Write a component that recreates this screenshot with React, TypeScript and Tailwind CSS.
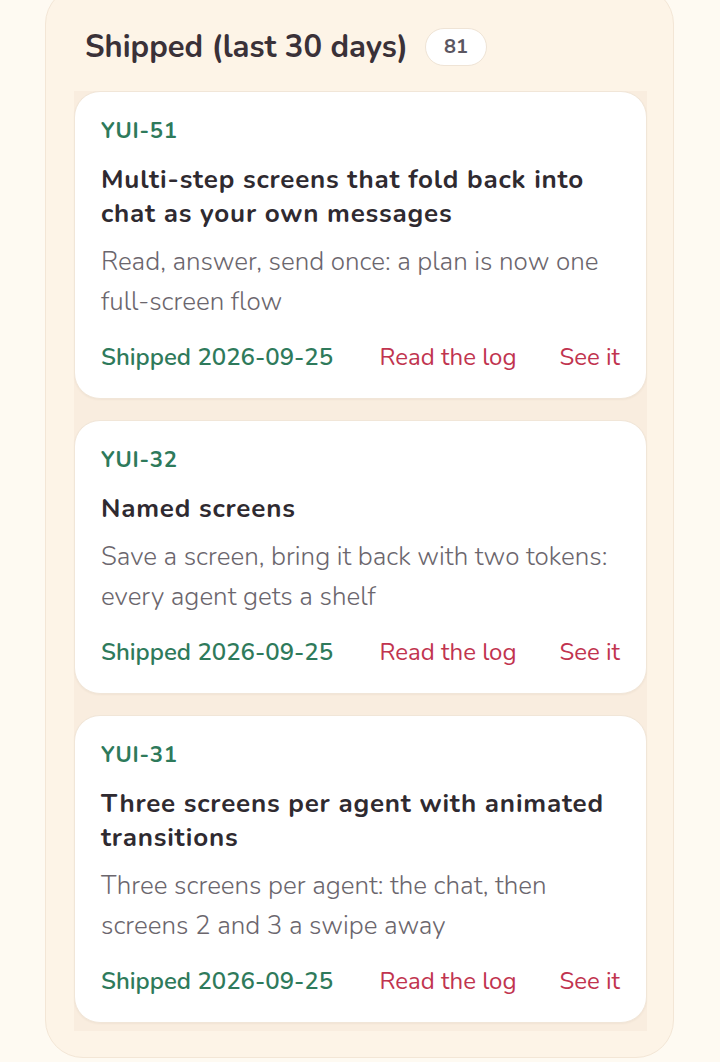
import * as React from "react";

type Item = {
	id: string;
	title: string;
	body: string;
	date: string;
};

const items: Item[] = [
	{
		id: "YUI-51",
		title: "Multi-step screens that fold back into chat as your own messages",
		body: "Read, answer, send once: a plan is now one full-screen flow",
		date: "2026-09-25",
	},
	{
		id: "YUI-32",
		title: "Named screens",
		body: "Save a screen, bring it back with two tokens: every agent gets a shelf",
		date: "2026-09-25",
	},
	{
		id: "YUI-31",
		title: "Three screens per agent with animated transitions",
		body: "Three screens per agent: the chat, then screens 2 and 3 a swipe away",
		date: "2026-09-25",
	},
];

function ShippedCard({ item }: { item: Item }) {
	return (
		<div className="rounded-[26px] border border-[#f1e6d8] bg-white px-[26px] pt-[26px] pb-[26px] shadow-[0_1px_2px_rgba(120,90,50,0.06)]">
			<div className="text-[22px] font-bold leading-[26px] tracking-[0.8px] text-[#2e7a5b]">
				{item.id}
			</div>
			<div className="mt-[19px] text-[26px] font-bold leading-[34px] tracking-[0.8px] text-[#2f2a30]">
				{item.title}
			</div>
			<div className="mt-[11px] text-[26px] font-light leading-[40px] text-[#6b666d]">
				{item.body}
			</div>
			<div className="mt-[20px] flex items-center justify-between text-[24px] leading-[30px]">
				<span className="font-semibold text-[#2e7a5b]">Shipped {item.date}</span>
				<div className="flex items-center gap-[43px] text-[#c1344f]">
					<a href="#">Read the log</a>
					<a href="#">See it</a>
				</div>
			</div>
		</div>
	);
}

export default function App() {
	return (
		<div
			className="min-h-screen overflow-hidden bg-[#fefaf2]"
			style={{ fontFamily: '"Nunito", "Open Sans", "Noto Sans", sans-serif' }}
		>
			<div className="mx-[45px] mt-[-14px] w-[629px] rounded-[38px] border border-[#f3e6d6] bg-[#fdf4e7] pt-[40px] pb-[26px] pl-[28px] pr-[26px]">
				<div className="flex items-center gap-[17px] pl-[11px]">
					<h2 className="text-[31px] font-bold leading-[40px] text-[#3a3138]">
						Shipped (last 30 days)
					</h2>
					<span className="flex h-[38px] min-w-[62px] items-center justify-center rounded-full border border-[#efe4d6] bg-white px-[18px] text-[20px] font-bold text-[#5b5661]">
						81
					</span>
				</div>
				<div className="mt-[24px] flex flex-col gap-[21px] bg-[#f9eddf] pb-[8px]">
					{items.map((item) => (
						<ShippedCard key={item.id} item={item} />
					))}
				</div>
			</div>
		</div>
	);
}
